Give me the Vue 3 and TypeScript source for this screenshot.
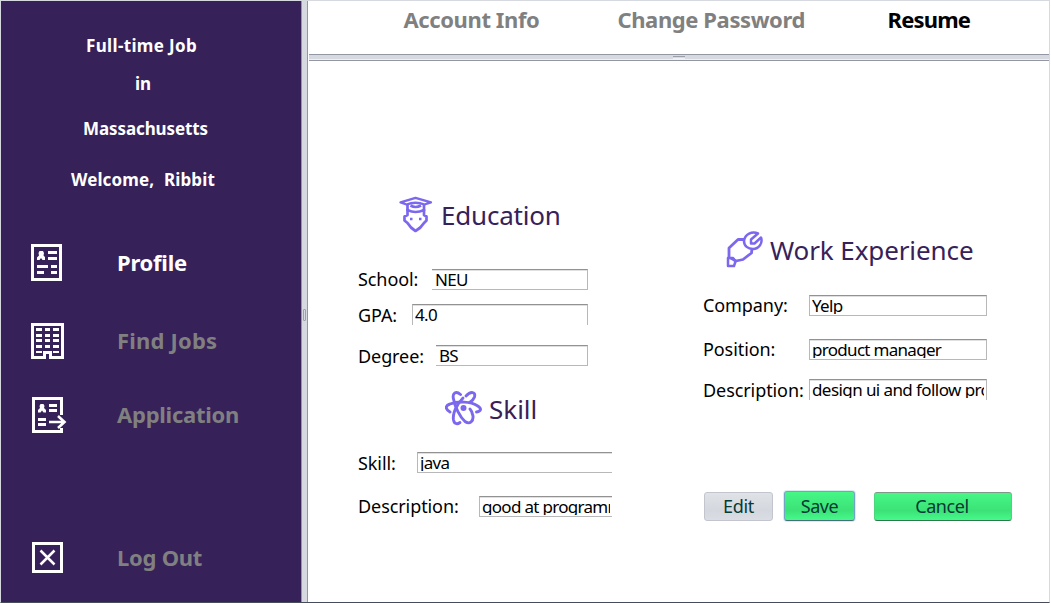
<script setup lang="ts">
import { ref } from 'vue'

interface Field {
  id: string
  label: string
  value: string
}

const education = ref<Field[]>([
  { id: 'school', label: 'School:', value: 'NEU' },
  { id: 'gpa', label: 'GPA:', value: '4.0' },
  { id: 'degree', label: 'Degree:', value: 'BS' },
])
const skills = ref<Field[]>([
  { id: 'skill', label: 'Skill:', value: 'java' },
  { id: 'skill-desc', label: 'Description:', value: 'good at programming' },
])
const work = ref<Field[]>([
  { id: 'company', label: 'Company:', value: 'Yelp' },
  { id: 'position', label: 'Position:', value: 'product manager' },
  { id: 'work-desc', label: 'Description:', value: 'design ui and follow process' },
])
</script>

<template>
  <div class="window">
    <aside class="sidebar">
      <p class="intro job">Full-time Job</p>
      <p class="intro in">in</p>
      <p class="intro state">Massachusetts</p>
      <p class="intro welcome"><span>Welcome,</span><span>Ribbit</span></p>

      <nav>
        <a class="nav profile active">
          <svg width="36" height="37" viewBox="0 0 36 37">
            <path d="M1.5 1.5H29.5V35.5H1.5Z" fill="none" stroke="#fff" stroke-width="3" />
            <path d="M8.500 7H12L13 9L12.500 11.500L14 13V16H11.500L10 14L8.500 16H6V13.500L8 11.500L7.500 9Z" fill="#fff" />
            <path d="M17 8.500H26M17 14.500H26M6 22.500H17M20 22.500H26M6 28.500H13M20 28.500H26" stroke="#fff" stroke-width="3" />
          </svg>
          <span>Profile</span>
        </a>
        <a class="nav jobs">
          <svg width="36" height="36" viewBox="0 0 36 36">
            <path d="M1.500 1.500H31.500V34.500H19.500V29.500H13.500V34.500H1.500Z" fill="none" stroke="#fff" stroke-width="3" />
            <path d="M5 6.500H11M14 6.500H19M22 6.500H28M5 12.500H11M14 12.500H19M22 12.500H28M5 17.500H11M14 17.500H19M22 17.500H28M5 23.500H11M14 23.500H19M22 23.500H28" stroke="#fff" stroke-width="3" />
            <path d="M5 29H11M22 29H28" stroke="#fff" stroke-width="2" />
          </svg>
          <span>Find Jobs</span>
        </a>
        <a class="nav application">
          <svg width="36" height="36" viewBox="0 0 36 36">
            <path d="M29.500 18V1.500H1.500V34.500H29.500V31" fill="none" stroke="#fff" stroke-width="3" />
            <path d="M8.500 7H11.500L12.500 9L12 11L14 13V15.500H11.500L10 13.500L8.500 15.500H6V13L8 11L7.500 9Z" fill="#fff" />
            <path d="M17 8.500H25M17 13.500H25M6 22.500H14M6 27.500H14" stroke="#fff" stroke-width="3" />
            <path d="M17 25H33M26 19L32.500 25L26 31" fill="none" stroke="#fff" stroke-width="2.600" />
          </svg>
          <span>Application</span>
        </a>
        <a class="nav logout">
          <svg width="36" height="31" viewBox="0 0 36 31">
            <path d="M1.500 1.500H29.500V29.500H1.500Z" fill="none" stroke="#fff" stroke-width="3" />
            <path d="M8.500 8.500L22.500 22.500M22.500 8.500L8.500 22.500" stroke="#fff" stroke-width="2.500" />
          </svg>
          <span>Log Out</span>
        </a>
      </nav>
    </aside>

    <div class="split-v"><i /></div>

    <section class="main">
      <header class="tabs">
        <a class="tab account">Account Info</a>
        <a class="tab password">Change Password</a>
        <a class="tab resume active">Resume</a>
      </header>
      <div class="split-h"><i /></div>

      <div class="content">
        <div class="left">
          <h2 class="edu-title">
            <svg width="36" height="38" viewBox="0 0 36 38" fill="none" stroke="#7b68ee" stroke-width="2.700" stroke-linejoin="round">
              <path d="M2.500 6.300L17.500 1.800L33 6.300L26.500 8.500Q17.500 5 8.500 8.500Z" stroke-width="2.300" />
              <path d="M9.500 8V15M26 8V15M12.500 9.500Q17.500 12.500 23 9.500" />
              <path d="M9.500 14Q17.500 18 26 14V19L28.500 20.500V24.500L26 27Q23 32 17.500 35Q12.500 32 9.500 27L6.500 24.500V20.500L9.500 19Z" />
              <path d="M12 23H14.500M21 23H23.500" stroke-width="2.400" />
            </svg>
            <span>Education</span>
          </h2>
          <div v-for="f in education" :key="f.id" class="row" :class="f.id">
            <label :for="f.id">{{ f.label }}</label>
            <div :id="f.id" class="field"><span>{{ f.value }}</span></div>
          </div>

          <h2 class="skill-title">
            <svg width="38" height="37" viewBox="0 0 38 37" fill="none" stroke="#7b68ee" stroke-width="2.900" stroke-linecap="round">
              <path d="M5 22C0 19 0 15.500 5 14C13 11 26 11.500 32 15.500C37 18.500 36.500 21 31.500 22" />
              <path d="M15.500 4.500C11 0.500 7 3 8.500 9C10 17 15 27 20 31.500C25 35 28.500 31 28 26C27.500 23 27 21 25 19" />
              <path d="M21 6C26 0.500 31 2 29.500 7C28.500 10 27 11 24.500 12.500M18 8C11 15 7.500 24 8.500 30C9.500 35 13 34 15 32.500" />
              <circle cx="18.500" cy="18" r="3" fill="#7b68ee" stroke="none" />
            </svg>
            <span>Skill</span>
          </h2>
          <div v-for="f in skills" :key="f.id" class="row" :class="f.id">
            <label :for="f.id">{{ f.label }}</label>
            <div :id="f.id" class="field clip"><span>{{ f.value }}</span></div>
          </div>
        </div>

        <div class="right">
          <h2 class="work-title">
            <svg width="38" height="37" viewBox="0 0 38 37" fill="none" stroke="#7b68ee" stroke-width="2.800" stroke-linejoin="round">
              <path d="M19 8.500H12L3 17V26L10 30L17 28.500L25.500 22L26 17.500" />
              <path d="M18 10C19 3 26 0 32 2.500L25 8.500V12.500H28.500L35 6.500C37 12 33 18 27 18C22 18 18 15 18 10Z" stroke-width="2.500" />
              <path d="M2 27L7 27L9.500 30.500L8 35H2Z" stroke-width="2.500" />
            </svg>
            <span>Work Experience</span>
          </h2>
          <div v-for="f in work" :key="f.id" class="row" :class="f.id">
            <label :for="f.id">{{ f.label }}</label>
            <div :id="f.id" class="field clip"><span>{{ f.value }}</span></div>
          </div>
          <div class="actions">
            <button class="edit">Edit</button>
            <button class="save">Save</button>
            <button class="cancel">Cancel</button>
          </div>
        </div>
      </div>
    </section>
  </div>
</template>

<style>
body {
  background: #fff;
  overflow: hidden;
}
</style>

<style scoped>
.window {
  box-sizing: border-box;
  width: 1050px;
  height: 603px;
  display: flex;
  border: 1px solid #d6d9df;
  border-bottom-color: #454c5c;
  background: #fff;
  font-family: 'Noto Sans', 'Open Sans', sans-serif;
  overflow: hidden;
}
.sidebar {
  width: 300px;
  flex: none;
  background: #372159;
  padding-top: 30px;
  box-sizing: border-box;
}
.intro {
  margin: 0;
  height: 30px;
  line-height: 30px;
  font-size: 17px;
  font-weight: 700;
  color: #fff;
  white-space: nowrap;
}
.job { margin-left: 85px; letter-spacing: 0.35px; }
.in { margin: 8px 0 0 134px; }
.state { margin: 15px 0 0 82px; letter-spacing: -0.1px; }
.welcome { margin: 21px 0 0 70px; display: flex; gap: 10px; letter-spacing: 0.1px; }

.nav {
  display: flex;
  align-items: center;
  font-size: 22px;
  font-weight: 700;
  line-height: 30px;
  letter-spacing: -0.25px;
  color: #808080;
  margin-left: 30px;
}
.nav svg { flex: none; margin-right: 50px; }
.nav span { margin-top: -2px; white-space: nowrap; }
.nav.active { color: #fff; }
.profile { height: 37px; margin-top: 49px; }
.jobs { height: 36px; margin-top: 42px; letter-spacing: 0.2px; }
.application { height: 36px; margin: 38px 0 0 31px; }
.logout { height: 31px; margin: 109px 0 0 31px; }
.application svg, .logout svg { margin-right: 49px; }

.split-v {
  box-sizing: border-box;
  width: 7px;
  flex: none;
  background: #d6d9df;
  border: solid #9297a1;
  border-width: 0 1px;
  display: flex;
  align-items: center;
  justify-content: center;
}
.split-v i {
  box-sizing: border-box;
  width: 3px;
  height: 12px;
  margin-top: 26px;
  border: 1px solid #9ba0aa;
  border-radius: 1px;
}
.main {
  width: 741px;
  flex: none;
  display: flex;
  flex-direction: column;
}
.tabs {
  height: 53px;
  flex: none;
  display: flex;
  align-items: flex-start;
  padding-left: 95.5px;
}
.tab {
  margin-top: 3px;
  font-size: 22px;
  font-weight: 700;
  line-height: 30px;
  letter-spacing: -0.4px;
  color: #808080;
  white-space: nowrap;
}
.account { width: 214px; }
.password { width: 270px; }
.resume { letter-spacing: -0.8px; }
.tab.active { color: #000; }
.split-h {
  box-sizing: border-box;
  height: 7px;
  flex: none;
  margin-left: 1px;
  background: linear-gradient(#d6d9df 0 4px, #eef0f4 4px);
  border: solid #9297a1;
  border-width: 1px 0;
  display: flex;
  justify-content: center;
}
.split-h i {
  box-sizing: border-box;
  width: 12px;
  height: 3px;
  margin-top: 1px;
  border: solid #9ba0aa;
  border-width: 1px 0;
  border-bottom-color: #eef0f4;
}

.content { display: flex; padding-left: 50px; }
.left { width: 345px; padding-top: 135px; }
.right { width: 320px; padding-top: 170px; }
h2 {
  margin: 0;
  display: flex;
  align-items: center;
  font-size: 26px;
  font-weight: 400;
  line-height: 36px;
  color: #372159;
  white-space: nowrap;
}
h2 svg { flex: none; }
.edu-title { height: 38px; padding-left: 40px; letter-spacing: -0.2px; }
.edu-title svg { margin-right: 7px; }
.skill-title { height: 37px; margin-top: 24px; padding-left: 87px; }
.skill-title svg { margin-right: 6px; }
.work-title { height: 37px; padding-left: 23px; letter-spacing: -0.1px; }
.work-title svg { margin-right: 6px; }

.row {
  display: flex;
  height: 21px;
  font-size: 18px;
  line-height: 20px;
  letter-spacing: -0.08px;
  color: #000;
}
.row label { flex: none; white-space: nowrap; }
.field {
  box-sizing: border-box;
  flex: none;
  height: 21px;
  border: 1px solid #b8b8b8;
  border-top-color: #929292;
  box-shadow: inset 0 1px #e0e0e0;
  padding: 0 2px;
  background: #fff;
}
.field span {
  display: block;
  height: 18px;
  line-height: 20px;
  font-size: 17px;
  letter-spacing: -0.7px;
  white-space: nowrap;
}
.clip span { overflow: hidden; }
.school { margin-top: 35px; }
.school label { width: 74px; }
.school .field { width: 156px; border-left: 0; padding-left: 3px; }
.gpa { margin-top: 14px; }
.gpa label { width: 54px; }
.gpa .field { width: 176px; border-bottom: 0; }
.degree { margin-top: 20px; }
.degree label { width: 78px; }
.degree .field { width: 152px; border-left: 0; padding-left: 3px; }
.skill { margin-top: 25px; }
.skill label { width: 59px; }
.skill .field { width: 195px; border-right: 0; }
.skill-desc { margin-top: 23px; }
.skill-desc label { width: 121px; }
.skill-desc .field { width: 133px; border-right: 0; }
.company { margin-top: 27px; }
.position { margin-top: 23px; }
.work-desc { margin-top: 19px; }
.right label { width: 106px; }
.right .field { width: 178px; }
.work-desc .field { border-bottom: 0; }
.gpa label, .skill label, .work-desc label, .degree label { padding-top: 1px; }
.work-desc .field span { letter-spacing: -0.58px; }

.actions { display: flex; align-items: flex-end; margin: 91px 0 0 1px; height: 30px; }
button {
  box-sizing: border-box;
  flex: none;
  height: 29px;
  padding: 0;
  border: 1px solid #4bd57c;
  border-top-color: #7e9a87;
  border-bottom-color: #2c7a49;
  border-radius: 3px;
  background: linear-gradient(#46f786, #3ce277 65%, #46f98a);
  font: 400 18px/27px 'Noto Sans', 'Open Sans', sans-serif;
  letter-spacing: -0.4px;
  color: #063a36;
}
.edit {
  width: 69px;
  margin-right: 11px;
  letter-spacing: -0.3px;
  border-color: #c2c5cd;
  background: linear-gradient(#dfe2e6, #d4d7de 65%, #dadde4);
}
.save {
  width: 71px;
  height: 30px;
  margin-right: 19px;
  border-color: #71a5c5;
  border-bottom-color: #466f78;
  box-shadow: 0 0 0 1px #a9c8dc66;
}
.cancel { width: 138px; padding-right: 2px; }
</style>
